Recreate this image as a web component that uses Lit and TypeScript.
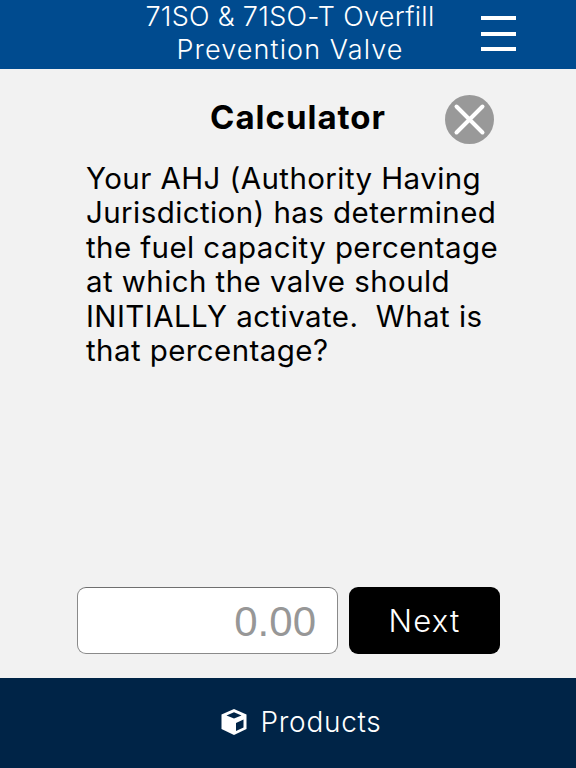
import { LitElement, html, css } from "lit";
import { customElement } from "lit/decorators.js";

@customElement("app-root")
export class AppRoot extends LitElement {
  static styles = css`
    :host {
      display: flex;
      flex-direction: column;
      width: 576px;
      height: 768px;
      overflow: hidden;
      background: #f2f2f2;
      font-family: Inter, "Liberation Sans", sans-serif;
      color: #000;
    }
    .header {
      height: 69px;
      flex: none;
      background: #004b8f;
      display: grid;
      grid-template-columns: 1fr 95px;
      color: #fff;
      box-sizing: border-box;
      padding-left: 99px;
    }
    .header-title {
      font-size: 27px;
      font-weight: 300;
      line-height: 33px;
      text-align: center;
      letter-spacing: 0.3px;
      white-space: nowrap;
    }
    .line-two {
      letter-spacing: 1.1px;
    }
    .burger {
      display: flex;
      flex-direction: column;
      gap: 11.5px;
      padding-top: 16px;
    }
    .burger span {
      display: block;
      width: 35px;
      height: 4px;
      background: #fff;
    }
    .main {
      flex: 1;
      display: flex;
      flex-direction: column;
      min-height: 0;
    }
    .title-row {
      display: grid;
      grid-template-columns: 1fr 49px;
      align-items: center;
      padding: 26px 82px 0 151px;
      height: 49px;
    }
    .title {
      font-size: 33px;
      font-weight: 700;
      line-height: 44px;
      text-align: center;
      letter-spacing: 1px;
      margin: 0 0 5px;
      white-space: nowrap;
    }
    .close {
      display: block;
      width: 49px;
      height: 49px;
    }
    .question {
      margin: 17px 70px 0 86px;
      font-size: 29.5px;
      font-weight: 400;
      line-height: 34.4px;
      letter-spacing: 0.42px;
      flex: 1;
    }
    .form {
      display: flex;
      gap: 11px;
      padding: 0 76px 24px 77px;
      height: 67px;
    }
    .input {
      flex: 1;
      box-sizing: border-box;
      background: #fff;
      border: 1px solid #8a8a8a;
      border-top-color: #6f6f6f;
      border-radius: 9px;
      font-family: "Liberation Sans", Arial, sans-serif;
      font-size: 42px;
      color: #979797;
      text-align: right;
      line-height: 68px;
      padding-right: 21px;
    }
    .next {
      width: 151px;
      background: #000;
      color: #fff;
      border-radius: 9px;
      display: flex;
      align-items: center;
      justify-content: center;
      font-size: 31px;
      font-weight: 300;
      letter-spacing: 1.2px;
    }
    .footer {
      height: 90px;
      flex: none;
      background: #002447;
      color: #fff;
      display: flex;
      align-items: center;
      justify-content: center;
      gap: 13px;
      font-size: 28px;
      font-weight: 300;
      letter-spacing: 0.7px;
      padding: 0 0 3px 25px;
      box-sizing: border-box;
    }
    .cube {
      display: block;
      width: 28px;
      height: 28px;
    }
  `;

  render() {
    return html`
      <div class="header">
        <div class="header-title">71SO &amp; 71SO-T Overfill<br /><span class="line-two">Prevention Valve</span></div>
        <div class="burger"><span></span><span></span><span></span></div>
      </div>
      <div class="main">
        <div class="title-row">
          <h1 class="title">Calculator</h1>
          <svg class="close" viewBox="0 0 49 49">
            <circle cx="24.5" cy="24.5" r="24.5" fill="#999"></circle>
            <path d="M11.5 11.5L37.5 37.5M37.5 11.5L11.5 37.5" stroke="#fff" stroke-width="4" stroke-linecap="round"></path>
          </svg>
        </div>
        <div class="question">
          Your AHJ (Authority Having Jurisdiction) has determined the fuel capacity percentage at which the valve should
          INITIALLY activate.&nbsp; What is that percentage?
        </div>
        <div class="form">
          <div class="input">0.00</div>
          <div class="next">Next</div>
        </div>
      </div>
      <div class="footer">
        <svg class="cube" viewBox="0 0 28 28">
          <path fill="#fff" d="M14 1L26.5 6.5V21L14 27L1.5 21V6.5Z"></path>
          <path fill="#002447" d="M14 4.2L21.5 7.4L14 10.6L6.5 7.4Z"></path>
          <path fill="#002447" d="M16 15L23.5 11.5V19.5L16 23Z"></path>
        </svg>
        <span>Products</span>
      </div>
    `;
  }
}
